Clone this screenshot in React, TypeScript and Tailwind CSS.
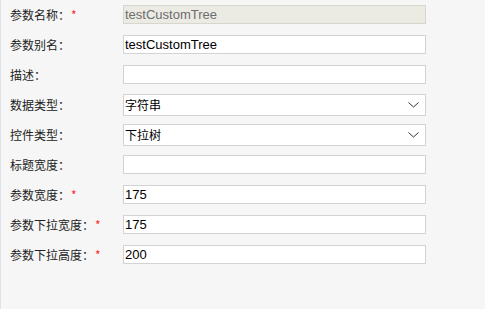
import React from "react";

type Row = { label: string; req?: boolean; value?: string; kind: "disabled" | "input" | "select" };

const rows: Row[] = [
  { label: "参数名称：", req: true, value: "testCustomTree", kind: "disabled" },
  { label: "参数别名：", value: "testCustomTree", kind: "input" },
  { label: "描述：", value: "", kind: "input" },
  { label: "数据类型：", value: "字符串", kind: "select" },
  { label: "控件类型：", value: "下拉树", kind: "select" },
  { label: "标题宽度：", value: "", kind: "input" },
  { label: "参数宽度：", req: true, value: "175", kind: "input" },
  { label: "参数下拉宽度：", req: true, value: "175", kind: "input" },
  { label: "参数下拉高度：", req: true, value: "200", kind: "input" },
];

const cjk = { fontFamily: '"Noto Sans CJK SC", "Liberation Sans", sans-serif' };
const val = { fontFamily: '"Liberation Sans", "Noto Sans CJK SC", sans-serif' };

function Field({ row }: { row: Row }) {
  if (row.kind === "select") {
    return (
      <div className="mt-[4px] h-[22px] w-[303px] border border-[#d3d3d3] bg-white flex items-center pl-[1px] pr-[5px]">
        <span className="text-[12px] leading-[20px] text-black flex-1" style={cjk}>
          {row.value}
        </span>
        <svg width="11" height="6" viewBox="0 0 11 6" className="mr-[1px]">
          <path d="M0.5 0.5 L5.5 5 L10.5 0.5" fill="none" stroke="#333" strokeWidth="1" />
        </svg>
      </div>
    );
  }
  const disabled = row.kind === "disabled";
  return (
    <div
      className={
        "mt-[5px] h-[19px] w-[303px] border flex items-center pl-[1px] " +
        (disabled ? "border-[#d6d6cf] bg-[#ebebe4] text-[#6d6d6d]" : "border-[#d3d3d3] bg-white text-black")
      }
    >
      <span className="text-[13px] leading-[17px]" style={val}>
        {row.value}
      </span>
    </div>
  );
}

export default function App() {
  return (
    <div className="w-[485px] h-[309px] bg-[#f6f6f6] border-l border-[#e1e1ec] overflow-hidden">
      <div className="flex flex-col">
        {rows.map((r, i) => (
          <div key={i} className="h-[30px] flex items-start">
            <div
              className="mt-[5px] h-[19px] w-[122px] pl-[9px] flex items-center text-[12px] text-[#222]"
              style={cjk}
            >
              <span>{r.label}</span>
              {r.req && <span className="text-[#ff2a2a] text-[12px] ml-[1px] mt-[1px]">*</span>}
            </div>
            <Field row={r} />
          </div>
        ))}
      </div>
    </div>
  );
}
